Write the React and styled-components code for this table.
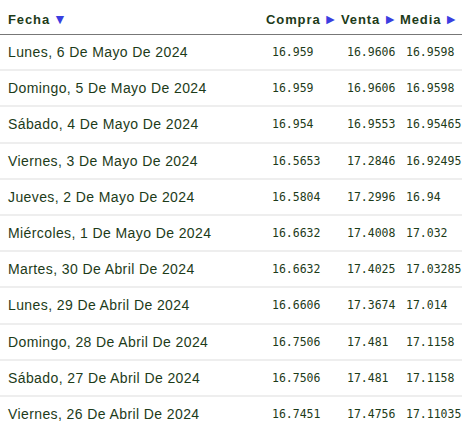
import React from "react";
import styled, { createGlobalStyle } from "styled-components";

const GlobalStyle = createGlobalStyle`
  body {
    margin: 0;
    background: #fff;
    font-family: "Liberation Sans", Arial, sans-serif;
  }
`;

const Table = styled.div`
  width: 462px;
  color: #1d3b19;
`;

const HeadRow = styled.div`
  display: grid;
  grid-template-columns: 266px 75px 59px 62px;
  align-items: center;
  height: 35px;
  border-bottom: 1px solid #777;
  box-sizing: border-box;
`;

const HeadCell = styled.div`
  font-weight: bold;
  font-size: 13px;
  letter-spacing: 0.9px;
  padding-left: ${(p) => (p.first ? "8px" : "0")};
  white-space: nowrap;
  padding-top: 3px;
`;

const Arrow = styled.span`
  color: #3a3ee0;
  font-size: 14px;
  letter-spacing: 0;
  margin-left: 3px;
`;

const Row = styled.div`
  display: grid;
  grid-template-columns: 266px 75px 59px 62px;
  align-items: center;
  height: 36.2px;
  border-bottom: 2px solid #eeeeee;
  box-sizing: border-box;
`;

const DateCell = styled.div`
  font-size: 14px;
  letter-spacing: 0.4px;
  padding-left: 8px;
  white-space: nowrap;
`;

const NumCell = styled.div`
  font-family: "DejaVu Sans Mono", "Liberation Mono", monospace;
  font-size: 11.5px;
  padding-left: 6px;
  white-space: nowrap;
`;

const rows = [
  ["Lunes, 6 De Mayo De 2024", "16.959", "16.9606", "16.9598"],
  ["Domingo, 5 De Mayo De 2024", "16.959", "16.9606", "16.9598"],
  ["Sábado, 4 De Mayo De 2024", "16.954", "16.9553", "16.95465"],
  ["Viernes, 3 De Mayo De 2024", "16.5653", "17.2846", "16.92495"],
  ["Jueves, 2 De Mayo De 2024", "16.5804", "17.2996", "16.94"],
  ["Miércoles, 1 De Mayo De 2024", "16.6632", "17.4008", "17.032"],
  ["Martes, 30 De Abril De 2024", "16.6632", "17.4025", "17.03285"],
  ["Lunes, 29 De Abril De 2024", "16.6606", "17.3674", "17.014"],
  ["Domingo, 28 De Abril De 2024", "16.7506", "17.481", "17.1158"],
  ["Sábado, 27 De Abril De 2024", "16.7506", "17.481", "17.1158"],
  ["Viernes, 26 De Abril De 2024", "16.7451", "17.4756", "17.11035"],
];

const App = () => {
  return (
    <>
      <GlobalStyle />
      <Table>
        <HeadRow>
          <HeadCell first>
            Fecha<Arrow>▼</Arrow>
          </HeadCell>
          <HeadCell>
            Compra<Arrow>►</Arrow>
          </HeadCell>
          <HeadCell>
            Venta<Arrow>►</Arrow>
          </HeadCell>
          <HeadCell>
            Media<Arrow>►</Arrow>
          </HeadCell>
        </HeadRow>
        {rows.map((r, i) => (
          <Row key={i}>
            <DateCell>{r[0]}</DateCell>
            <NumCell>{r[1]}</NumCell>
            <NumCell>{r[2]}</NumCell>
            <NumCell>{r[3]}</NumCell>
          </Row>
        ))}
      </Table>
    </>
  );
};

export default App;
